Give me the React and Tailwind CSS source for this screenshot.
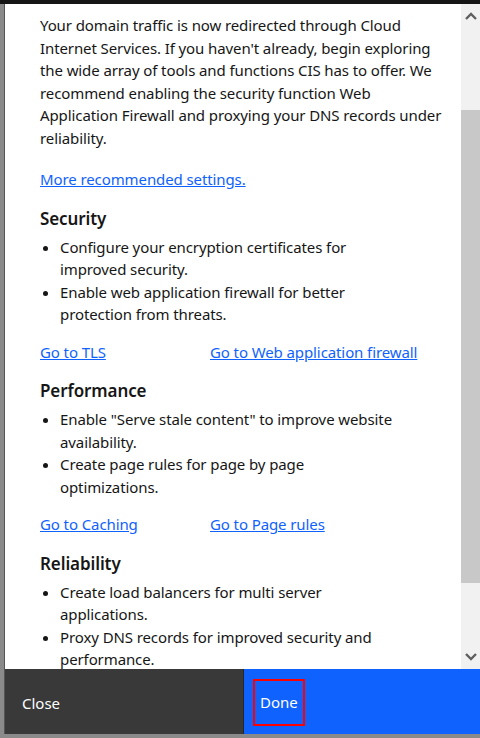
import React from 'react';

const intro = [
  'Your domain traffic is now redirected through Cloud',
  "Internet Services. If you haven't already, begin exploring",
  'the wide array of tools and functions CIS has to offer. We',
  'recommend enabling the security function Web',
  'Application Firewall and proxying your DNS records under',
  'reliability.',
];

const sections = [
  {
    title: 'Security',
    items: [
      ['Configure your encryption certificates for', 'improved security.'],
      ['Enable web application firewall for better', 'protection from threats.'],
    ],
    links: ['Go to TLS', 'Go to Web application firewall'],
  },
  {
    title: 'Performance',
    items: [
      ['Enable "Serve stale content" to improve website', 'availability.'],
      ['Create page rules for page by page', 'optimizations.'],
    ],
    links: ['Go to Caching', 'Go to Page rules'],
  },
  {
    title: 'Reliability',
    items: [
      ['Create load balancers for multi server', 'applications.'],
      ['Proxy DNS records for improved security and', 'performance.'],
    ],
    links: [],
  },
];

const Chevron = ({ down }) => (
  <svg width="12" height="8" viewBox="0 0 12 8" className={down ? 'rotate-180' : ''}>
    <path d="M1 7 L6 2 L11 7" fill="none" stroke="#5f5f5f" strokeWidth="2.4" />
  </svg>
);

export default function App() {
  return (
    <div className="w-[480px] h-[738px] flex flex-col bg-[#161616] overflow-hidden text-[#161616]" style={{ fontFamily: '"Noto Sans", "Open Sans", sans-serif' }}>
      <div className="h-[4px] shrink-0 bg-[#161616]" />
      <div className="flex flex-1 min-h-0">
        {/* backdrop strip */}
        <div className="w-[5px] shrink-0 bg-[#8a8a8a] border-r border-[#555]" />
        <div className="flex-1 flex flex-col bg-white min-w-0">
          <div className="flex flex-1 min-h-0">
            <div className="flex-1 overflow-hidden pl-[35px] pr-[10px] pt-[10px] text-[15px] leading-[22.5px] tracking-[-0.1px] whitespace-nowrap">
              <p>
                {intro.map((l) => (
                  <span key={l} className="block">{l}</span>
                ))}
              </p>
              <a href="#" className="inline-block mt-[19px] text-[#0f62fe] underline">More recommended settings.</a>
              {sections.map((s) => (
                <div key={s.title} className="mt-[16px]">
                  <h3 className="text-[17px] font-semibold leading-[24px]">{s.title}</h3>
                  <ul className="list-disc pl-[20px] mt-[5px]">
                    {s.items.map((it) => (
                      <li key={it[0]}>
                        {it[0]}
                        <br />
                        {it[1]}
                      </li>
                    ))}
                  </ul>
                  {s.links.length > 0 && (
                    <div className="flex mt-[15px]">
                      <a href="#" className="w-[170px] text-[#0f62fe] underline">{s.links[0]}</a>
                      <a href="#" className="text-[#0f62fe] underline">{s.links[1]}</a>
                    </div>
                  )}
                </div>
              ))}
            </div>
            {/* scrollbar */}
            <div className="w-[19px] shrink-0 bg-[#f1f1f1] flex flex-col items-center">
              <div className="h-[20px] flex items-center justify-center pt-[4px]"><Chevron /></div>
              <div className="h-[86px]" />
              <div className="w-full h-[473px] bg-[#c8c8c8]" />
              <div className="flex-1" />
              <div className="h-[20px] flex items-center justify-center pb-[4px]"><Chevron down /></div>
            </div>
          </div>
          <div className="h-[65px] shrink-0 flex text-[15px]">
            <button className="w-[238px] bg-[#393939] text-white text-left pl-[17px] pt-[3px]">Close</button>
            <div className="flex-1 bg-[#0f62fe] flex items-center pl-[9px] pt-[2px] border-l border-[#262626]">
              <button className="h-[47px] px-[5px] border-2 border-[#ff0000] text-white">Done</button>
            </div>
          </div>
        </div>
      </div>
      <div className="h-[4px] shrink-0 bg-[#8a8a8a]" />
    </div>
  );
}
